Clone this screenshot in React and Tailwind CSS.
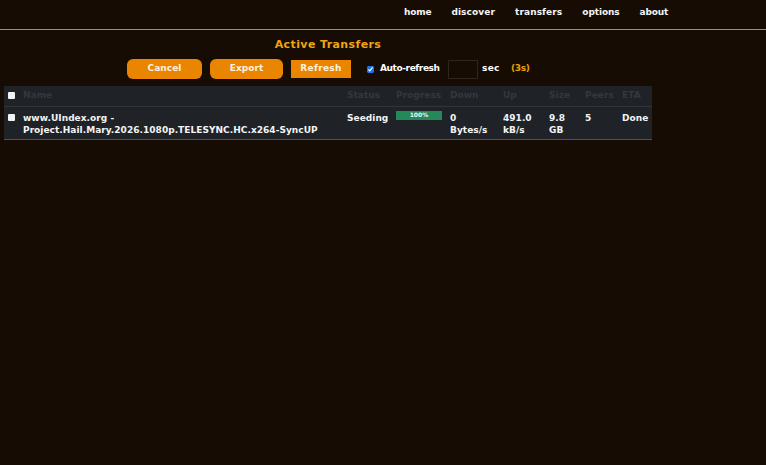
const f = { fontFamily: '"DejaVu Sans", sans-serif' };

const cols = [
  ["", 15], ["Name", 324], ["Status", 49], ["Progress", 54], ["Down", 53], ["Up", 46], ["Size", 36], ["Peers", 37], ["ETA", 34],
];

function App() {
  return (
    <div className="min-h-[465px] bg-[#170c04] text-white text-[9px] font-bold tracking-[0.04px]" style={f}>
      <header className="h-[30px] border-b border-[#c8824a] flex justify-end items-center pr-[98px] pb-[4px] gap-[20px] text-[#f4f4f4] text-[9px] tracking-[0.1px]">
        <a className="tracking-[-0.2px]">home</a>
        <a>discover</a>
        <a>transfers</a>
        <a className="tracking-[-0.1px]">options</a>
        <a className="tracking-[-0.2px]">about</a>
      </header>
      <div className="w-[656px]">
        <h2 className="text-center text-[11px] leading-[14px] font-bold text-[#f0a410] mt-[8px] tracking-[0.4px]">Active Transfers</h2>
        <div className="flex items-center h-[20px] mt-[7px] pl-[127px]">
          <button className="w-[75px] h-[20px] rounded-[6px] bg-[#ea8500] text-[#fff2e0]">Cancel</button>
          <button className="w-[73px] h-[20px] rounded-[6px] bg-[#ea8500] text-[#fff2e0] ml-[8px]">Export</button>
          <button className="w-[60px] h-[18px] bg-[#ea8500] text-[#fff2e0] ml-[8px] tracking-[0.3px]">Refresh</button>
          <input type="checkbox" defaultChecked className="w-[7px] h-[7px] ml-[16px] accent-[#1a73e8]" />
          <span className="ml-[6px] w-[59px] whitespace-nowrap tracking-[-0.4px]">Auto-refresh</span>
          <input className="w-[30px] h-[19px] ml-[9px] bg-transparent border border-[#2c2622]" />
          <span className="ml-[4px] w-[17px] tracking-[0.3px]">sec</span>
          <span className="ml-[12px] text-[#e8a000] tracking-[-0.3px]">(3s)</span>
        </div>
        <table className="table-fixed border-collapse w-[648px] ml-[4px] mt-[7px] bg-[#1f2328]">
          <colgroup>
            {cols.map(([n, w]) => <col key={n} style={{ width: w }} />)}
          </colgroup>
          <thead>
            <tr className="h-[20px] border-b border-[#32363a] text-[#33383d] text-left">
              <th className="pl-[4px] pb-[1px]"><input type="checkbox" className="block w-[7px] h-[7px] appearance-none bg-[#f2f2f2] rounded-[1px]" /></th>
              {cols.slice(1).map(([n]) => (
                <th key={n} className="pl-[4px] font-bold">{n}</th>
              ))}
            </tr>
          </thead>
          <tbody>
            <tr className="h-[33px] border-b border-[#6b4a30] align-top leading-[12px] text-[#f4f4f4]">
              <td className="pl-[4px] pt-[7px]"><input type="checkbox" className="block w-[7px] h-[7px] appearance-none bg-[#f2f2f2] rounded-[1px]" /></td>
              <td className="pl-[4px] pt-[5px] whitespace-nowrap">www.UIndex.org -<br />Project.Hail.Mary.2026.1080p.TELESYNC.HC.x264-SyncUP</td>
              <td className="pl-[4px] pt-[5px]">Seeding</td>
              <td className="pl-[4px] pt-[4px]">
                <div className="w-[46px] h-[9px] bg-[#23895a] text-[6px] leading-[8px] text-center">100%</div>
              </td>
              <td className="pl-[4px] pt-[5px]">0<br />Bytes/s</td>
              <td className="pl-[4px] pt-[5px]">491.0<br />kB/s</td>
              <td className="pl-[4px] pt-[5px]">9.8<br />GB</td>
              <td className="pl-[4px] pt-[5px]">5</td>
              <td className="pl-[4px] pt-[5px]">Done</td>
            </tr>
          </tbody>
        </table>
      </div>
    </div>
  );
}

export default App;
